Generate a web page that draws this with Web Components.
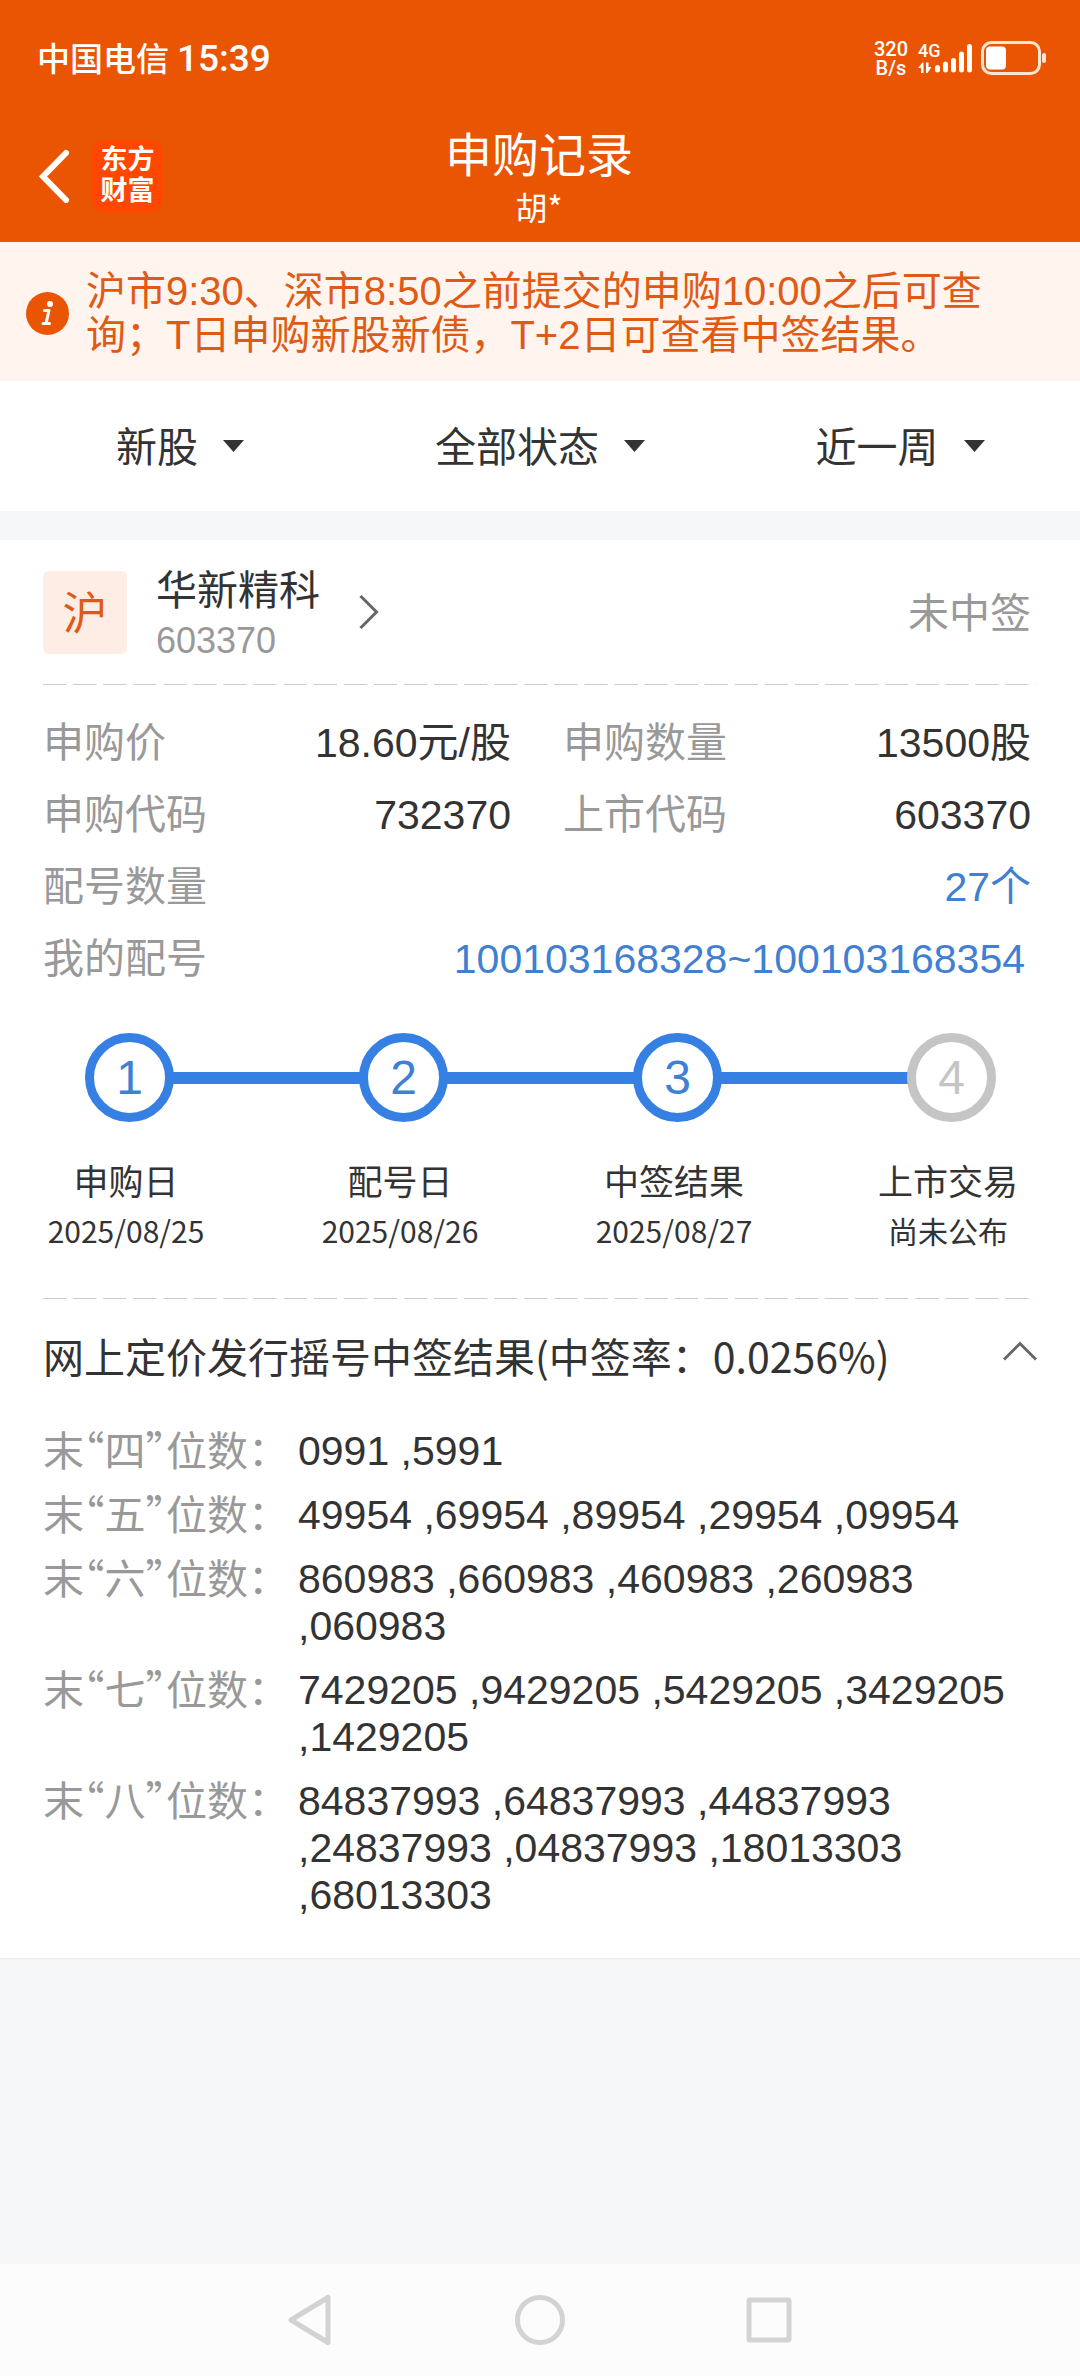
<!DOCTYPE html>
<html lang="zh-CN">
<head>
<meta charset="utf-8">
<meta name="viewport" content="width=device-width, initial-scale=1">
<title>申购记录</title>
<style>
  :root {
    --brand: #ea5504;
    --ink: #333;
    --muted: #999;
    --blue: #3580e2;
    --blue-text: #3f80d2;
    --page: #f6f7f9;
    --num: "Liberation Sans", "Noto Sans CJK SC", sans-serif;
    --num-status: Roboto, "Noto Sans CJK SC", sans-serif;
  }
  html, body { margin: 0; }
  body {
    min-height: 100vh;
    display: flex;
    flex-direction: column;
    background: var(--page);
    color: var(--ink);
    font: 400 41px/60px "Noto Sans CJK SC", "Noto Sans", sans-serif;
  }
  main { flex: 1; }
</style>
</head>
<body>
<status-bar carrier="中国电信" time="15:39"></status-bar>
<app-header>申购记录<span slot="sub">胡*</span></app-header>
<main>
  <notice-bar>沪市9:30、深市8:50之前提交的申购10:00之后可查询；T日申购新股新债，T+2日可查看中签结果。</notice-bar>
  <filter-bar>
    <filter-select label="品种" value="新股"></filter-select>
    <filter-select label="状态" value="全部状态"></filter-select>
    <filter-select label="时间" value="近一周"></filter-select>
  </filter-bar>
  <record-card>
    <stock-head market="沪" name="华新精科" code="603370">未中签</stock-head>
    <dash-line></dash-line>
    <info-grid>
      <info-item label="申购价">18.60元/股</info-item>
      <info-item label="申购数量">13500股</info-item>
      <info-item label="申购代码">732370</info-item>
      <info-item label="上市代码">603370</info-item>
      <info-item wide label="配号数量" href="#count">27个</info-item>
      <info-item wide label="我的配号" href="#numbers" inset>100103168328~100103168354</info-item>
    </info-grid>
    <step-track></step-track>
    <dash-line></dash-line>
    <lottery-result heading="网上定价发行摇号中签结果(中签率：0.0256%)">
      <lottery-row label="末“四”位数：">0991 <wbr>,5991</lottery-row>
      <lottery-row label="末“五”位数：">49954 <wbr>,69954 <wbr>,89954 <wbr>,29954 <wbr>,09954</lottery-row>
      <lottery-row label="末“六”位数：">860983 <wbr>,660983 <wbr>,460983 <wbr>,260983 <wbr>,060983</lottery-row>
      <lottery-row label="末“七”位数：">7429205 <wbr>,9429205 <wbr>,5429205 <wbr>,3429205 <wbr>,1429205</lottery-row>
      <lottery-row label="末“八”位数：">84837993 <wbr>,64837993 <wbr>,44837993 <wbr>,24837993 <wbr>,04837993 <wbr>,18013303 <wbr>,68013303</lottery-row>
    </lottery-result>
  </record-card>
</main>
<nav-keys></nav-keys>

<script>
  const define = (name, render) => customElements.define(name, class extends HTMLElement {
    constructor() {
      super();
      this.attachShadow({ mode: 'open' });
    }
    connectedCallback() {
      this.shadowRoot.innerHTML = render(this);
    }
  });
  const attr = (el, name) => el.getAttribute(name) || '';

  define('status-bar', el => `
    <style>
      :host { display: flex; justify-content: space-between; align-items: center; height: 116px;
        padding: 0 33px 0 37px; background: var(--brand); color: #fff; font-weight: 500; }
      .left { display: flex; align-items: baseline; gap: 8px; font-size: 33px; }
      .right { display: flex; align-items: center; }
      .time { font-family: var(--num-status); font-size: 37px; }
      .rate { display: grid; font-family: var(--num-status); font-size: 20px; line-height: 19px; text-align: center; margin-right: 10px; padding-top: 2px; }
      .net { display: flex; align-items: flex-start; height: 32px; }
      .gen { display: flex; flex-direction: column; font-family: var(--num-status); font-size: 18px; line-height: 18px; width: 16px; white-space: nowrap; }
      .gen svg { margin-top: 2px; }
      svg { display: block; }
      .battery { margin-left: 8px; }
    </style>
    <div class="left"><span>${attr(el, 'carrier')}</span><span class="time">${attr(el, 'time')}</span></div>
    <div class="right">
      <div class="rate"><span>320</span><span>B/s</span></div>
      <div class="net">
        <div class="gen"><span>4G</span>
          <svg width="14" height="12" viewBox="0 0 14 12" fill="#fff"><path d="M3 11V6H0L4.500 0.500H5.500V11zM8 0.500h2.500V5H13.500L9.500 11H8z"/></svg>
        </div>
        <svg width="39" height="32" viewBox="0 0 39 32" fill="none" stroke="#fff" stroke-width="5" stroke-linecap="round"><path d="M3.500 25.500v2.500M11.500 22v6M19.500 18.500v9.500M27.500 12v16M35.500 4.500v23.500"/></svg>
      </div>
      <svg class="battery" width="66" height="34" viewBox="0 0 66 34"><rect x="1.500" y="1.500" width="57" height="31" rx="9" fill="none" stroke="#ffe6d2" stroke-width="3"/><rect x="5" y="5.500" width="20" height="23" rx="4" fill="#fff"/><rect x="61" y="12" width="4" height="10" rx="2" fill="#ffe6d2"/></svg>
    </div>`);

  define('app-header', () => `
    <style>
      :host { display: grid; grid-template-columns: 1fr auto 1fr; align-items: center;
        padding: 6px 40px 12px 38px; background: var(--brand); color: #fff; text-align: center; }
      .left { display: flex; align-items: center; gap: 22px; }
      button { border: 0; padding: 0; background: none; }
      svg { display: block; }
      .logo { display: grid; place-content: center; width: 71px; height: 72px; box-sizing: border-box;
        border-radius: 13px; background: #ff4700; font-family: var(--num); font-size: 27px; line-height: 31px; font-weight: 700; }
      h1 { margin: 0; font-size: 47px; line-height: 60px; font-weight: 400; }
      .sub { font-size: 32px; line-height: 48px; }
    </style>
    <div class="left">
      <button aria-label="返回"><svg width="32" height="54" viewBox="0 0 32 54" fill="none" stroke="#fff" stroke-width="6" stroke-linecap="round"><path d="M28 4L5 27.500L28 51"/></svg></button>
      <div class="logo"><span>东方</span><span>财富</span></div>
    </div>
    <div><h1><slot></slot></h1><div class="sub"><slot name="sub"></slot></div></div>`);

  define('notice-bar', () => `
    <style>
      :host { display: flex; align-items: center; gap: 17px; padding: 27px 86px 24px 26px;
        background: #fff4ee; color: #df5a14; font-family: var(--num); font-size: 40px; line-height: 44px; }
      svg { flex: none; }
      p { margin: 0; }
    </style>
    <svg width="43" height="43" viewBox="0 0 43 43"><circle cx="21.500" cy="21.500" r="21.500" fill="#ea5504"/><circle cx="24" cy="12" r="3" fill="#fff"/><path d="M18.500 18.500h4.500l-3 13M17 31.500h6.500" fill="none" stroke="#fff" stroke-width="3" stroke-linejoin="round" stroke-linecap="round"/></svg>
    <p><slot></slot></p>`);

  define('filter-bar', () => `
    <style>
      :host { display: flex; background: #fff; padding: 33px 0 37px; margin-bottom: 29px; }
      ::slotted(*) { flex: 1; }
    </style><slot></slot>`);

  define('filter-select', el => `
    <style>
      :host { display: flex; justify-content: center; }
      label { display: flex; align-items: center; gap: 25px; }
      select { appearance: none; border: 0; padding: 0; margin: 0; background: none; color: inherit; font: inherit; line-height: 60px; field-sizing: content; }
      svg { margin-top: 3px; }
    </style>
    <label><select aria-label="${attr(el, 'label')}"><option>${attr(el, 'value')}</option></select>
      <svg width="21" height="12" viewBox="0 0 21 12"><path d="M0 0H21L10.500 12Z" fill="#333"/></svg></label>`);

  define('record-card', () => `
    <style>
      :host { display: block; background: #fff; padding: 21px 49px 39px 43px; border-bottom: 1px solid #e9eaec; }
    </style><slot></slot>`);

  define('dash-line', () => `
    <style>
      :host { display: block; height: 1px; margin-right: -5px;
        background: linear-gradient(90deg, #ccc 77%, transparent 77%) 0 0 / 30px 1px round; }
    </style>`);

  define('stock-head', el => `
    <style>
      :host { display: flex; align-items: center; margin-bottom: 21px; }
      .badge { display: grid; place-content: center; width: 84px; height: 83px; border-radius: 6px;
        background: #fdede4; color: #df5a14; font-size: 45px; margin-right: 29px; box-sizing: border-box; padding-bottom: 3px; }
      .name { line-height: 52px; }
      .code { font-family: var(--num); font-size: 36px; line-height: 44px; padding-top: 6px; color: var(--muted); }
      a { display: flex; align-items: center; gap: 39px; color: inherit; text-decoration: none; }
      .state { margin-left: auto; padding-bottom: 5px; color: var(--muted); }
    </style>
    <div class="badge">${attr(el, 'market')}</div>
    <a href="#stock"><div><div class="name">${attr(el, 'name')}</div><div class="code">${attr(el, 'code')}</div></div>
      <svg width="20" height="34" viewBox="0 0 20 34" fill="none" stroke="#666" stroke-width="3"><path d="M1.500 1L17.500 17L1.500 33"/></svg></a>
    <div class="state"><slot></slot></div>`);

  define('info-grid', () => `
    <style>
      :host { display: grid; grid-template-columns: 1fr 1fr; column-gap: 52px; padding: 22px 0 38px; }
      ::slotted([wide]) { grid-column: 1 / -1; }
    </style><slot></slot>`);

  define('info-item', el => `
    <style>
      :host { display: flex; justify-content: space-between; align-items: flex-start; line-height: 72px; white-space: nowrap; }
      :host([inset]) { padding-right: 6px; }
      .label { color: var(--muted); line-height: 64px; }
      .value { font-family: var(--num); }
      a { color: var(--blue-text); text-decoration: none; }
    </style>
    <span class="label">${attr(el, 'label')}</span>
    ${el.hasAttribute('href') ? `<a class="value" href="${attr(el, 'href')}"><slot></slot></a>` : '<span class="value"><slot></slot></span>'}`);

  const steps = [
    ['申购日', '2025/08/25', true],
    ['配号日', '2025/08/26', true],
    ['中签结果', '2025/08/27', true],
    ['上市交易', '尚未公布', false]
  ];
  define('step-track', () => `
    <style>
      :host { display: block; padding-bottom: 43px; }
      .rail { display: flex; align-items: center; padding: 0 35px 0 42px; }
      .dot { flex: none; display: grid; place-content: center; width: 89px; height: 89px; box-sizing: border-box;
        border: 9px solid #c5c5c5; border-radius: 50%; color: #c5c5c5; font-family: var(--num); font-size: 48px; }
      .dot.done { border-color: var(--blue); color: var(--blue-text); }
      .bar { flex: 1; height: 12px; margin: 0 -2px; background: var(--blue); }
      .names { display: flex; justify-content: space-between; margin-top: 33px; text-align: center; line-height: 50px; }
      .names > div { width: 166px; white-space: nowrap; }
      .title { font-size: 35px; }
      .date { font-size: 30px; }
    </style>
    <div class="rail">${steps.map((s, i) => `${i ? '<div class="bar"></div>' : ''}<div class="dot${s[2] ? ' done' : ''}">${i + 1}</div>`).join('')}</div>
    <div class="names">${steps.map(s => `<div><div class="title">${s[0]}</div><div class="date">${s[1]}</div></div>`).join('')}</div>`);

  define('lottery-result', el => `
    <style>
      :host { display: block; padding-top: 26px; }
      button { display: flex; justify-content: space-between; align-items: center; width: 100%; border: 0; padding: 0;
        background: none; color: inherit; font: inherit; text-align: left; }
      svg { flex: none; margin: 0 -6px 8px 0; }
      .rows { display: grid; gap: 17px; padding-top: 43px; }
    </style>
    <button aria-expanded="true"><span>${attr(el, 'heading')}</span>
      <svg width="34" height="20" viewBox="0 0 34 20" fill="none" stroke="#666" stroke-width="3"><path d="M1 18.500L17 2.500L33 18.500"/></svg></button>
    <div class="rows"><slot></slot></div>`);

  define('lottery-row', el => `
    <style>
      :host { display: grid; grid-template-columns: 255px 1fr; align-items: start; line-height: 47px; }
      .label { color: var(--muted); font-feature-settings: "halt"; line-height: 40px; white-space: nowrap; }
      .value { font-family: var(--num); }
    </style>
    <span class="label">${attr(el, 'label')}</span><span class="value"><slot></slot></span>`);

  define('nav-keys', () => `
    <style>
      :host { display: flex; justify-content: center; align-items: center; gap: 177px; height: 112px; background: #fcfcfc; }
      button { border: 0; padding: 0; background: none; }
      svg { display: block; fill: none; stroke: #d3d3d3; stroke-width: 5; stroke-linejoin: round; }
    </style>
    <button aria-label="返回"><svg width="52" height="52" viewBox="0 0 52 52"><path d="M43 3.500V48.500L6 26Z"/></svg></button>
    <button aria-label="主页"><svg width="52" height="52" viewBox="0 0 52 52"><circle cx="26" cy="26" r="22.500"/></svg></button>
    <button aria-label="最近任务"><svg width="52" height="52" viewBox="0 0 52 52"><rect x="6" y="6" width="40" height="40" rx="1"/></svg></button>`);
</script>
</body>
</html>
